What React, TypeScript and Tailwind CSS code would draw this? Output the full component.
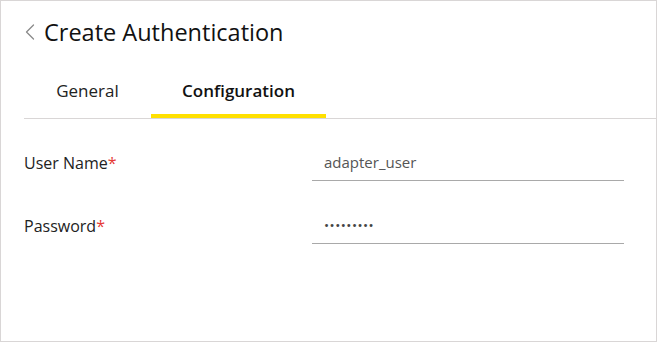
import { ChevronLeft } from "lucide-react";

const FIELDS = [
  { label: "User Name", value: "adapter_user", type: "text" },
  { label: "Password", value: "•••••••••", type: "password" },
];

export default function App() {
  return (
    <div
      className="w-[657px] h-[342px] bg-white border border-[#d9d6d6] overflow-hidden"
      style={{ fontFamily: '"Open Sans", "Noto Sans", sans-serif' }}
    >
      {/* Header */}
      <div className="flex items-center pl-[15px] pt-[14px] h-[47px]">
        <ChevronLeft className="w-[28px] h-[28px] text-[#8a8a8a]" strokeWidth={1.1} />
        <h1 className="text-[23.5px] leading-[32px] text-[#111] font-medium">
          Create Authentication
        </h1>
      </div>

      {/* Tabs */}
      <div className="ml-[23px] mt-[22px] flex border-b border-[#d9d6d6]">
        <div className="w-[127px] h-[48px] flex items-center justify-center pb-[6px] text-[17px] text-[#222]">
          General
        </div>
        <div className="w-[175px] h-[48px] flex items-center justify-center pb-[2px] text-[17px] font-semibold text-[#111] border-b-4 border-[#ffe000]">
          Configuration
        </div>
      </div>

      {/* Form */}
      <div className="ml-[23px] mt-[26px] flex flex-col gap-[27px]">
        {FIELDS.map((f) => (
          <div key={f.label} className="flex items-center h-[36px]">
            <div className="w-[288px] text-[16px] text-[#222]">
              {f.label}
              <span className="text-[#e53935]">*</span>
            </div>
            <div className="w-[312px] h-[36px] border-b border-[#a9a9a9] flex items-center pl-[12px]">
              {f.type === "password" ? (
                <span className="text-[13.5px] tracking-[0.5px] text-[#444]">{f.value}</span>
              ) : (
                <span className="text-[15px] text-[#555]">{f.value}</span>
              )}
            </div>
          </div>
        ))}
      </div>
    </div>
  );
}
